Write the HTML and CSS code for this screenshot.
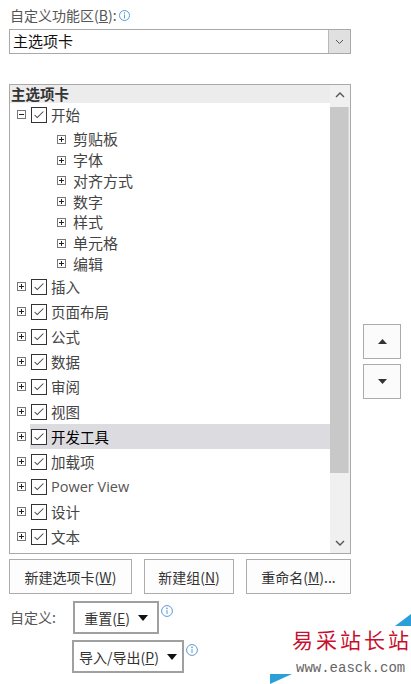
FILE: index.html
```html
<!DOCTYPE html>
<html lang="zh-CN">
<head>
    <meta charset="UTF-8">
    <meta name="viewport" content="width=device-width, initial-scale=1.0">
    <title>自定义功能区</title>
    <link rel="stylesheet" href="styles.css">
</head>
<body>
    <div class="panel">
        <div class="field-label">
            <span>自定义功能区(<u>B</u>):</span>
            <svg class="info info-top" width="11" height="11" viewBox="0 0 11 11"><circle cx="5.5" cy="5.5" r="5" fill="none" stroke="#5b9bd5"/><circle cx="5.5" cy="3" r="0.7" fill="#5b9bd5"/><path d="M5.5 4.6v3.8" stroke="#5b9bd5"/></svg>
        </div>

        <div class="select">
            <span class="select-text">主选项卡</span>
            <span class="select-btn">
                <svg width="9" height="6" viewBox="0 0 9 6"><path d="M1 1l3.5 3.5L8 1" fill="none" stroke="#555"/></svg>
            </span>
        </div>

        <div class="tree-area">
            <div class="tree">
                <div class="tree-body">
                    <div class="tree-head">主选项卡</div>

                    <div class="row top first">
                        <svg class="exp" width="9" height="9" viewBox="0 0 9 9"><rect x="0.5" y="0.5" width="8" height="8" fill="#fff" stroke="#777"/><path d="M2 4.5h5" stroke="#222"/></svg>
                        <span class="item"><span class="check"><svg width="16" height="16" viewBox="0 0 16 16"><path d="M3 8l3 3 7-7" fill="none" stroke="#444" stroke-width="1.2"/></svg></span>开始</span>
                    </div>
                    <div class="subgroup">
                        <div class="row sub"><svg class="exp" width="9" height="9" viewBox="0 0 9 9"><rect x="0.5" y="0.5" width="8" height="8" fill="#fff" stroke="#777"/><path d="M2 4.5h5M4.5 2v5" stroke="#222"/></svg><span class="sub-text">剪贴板</span></div>
                        <div class="row sub"><svg class="exp" width="9" height="9" viewBox="0 0 9 9"><rect x="0.5" y="0.5" width="8" height="8" fill="#fff" stroke="#777"/><path d="M2 4.5h5M4.5 2v5" stroke="#222"/></svg><span class="sub-text">字体</span></div>
                        <div class="row sub"><svg class="exp" width="9" height="9" viewBox="0 0 9 9"><rect x="0.5" y="0.5" width="8" height="8" fill="#fff" stroke="#777"/><path d="M2 4.5h5M4.5 2v5" stroke="#222"/></svg><span class="sub-text">对齐方式</span></div>
                        <div class="row sub"><svg class="exp" width="9" height="9" viewBox="0 0 9 9"><rect x="0.5" y="0.5" width="8" height="8" fill="#fff" stroke="#777"/><path d="M2 4.5h5M4.5 2v5" stroke="#222"/></svg><span class="sub-text">数字</span></div>
                        <div class="row sub"><svg class="exp" width="9" height="9" viewBox="0 0 9 9"><rect x="0.5" y="0.5" width="8" height="8" fill="#fff" stroke="#777"/><path d="M2 4.5h5M4.5 2v5" stroke="#222"/></svg><span class="sub-text">样式</span></div>
                        <div class="row sub"><svg class="exp" width="9" height="9" viewBox="0 0 9 9"><rect x="0.5" y="0.5" width="8" height="8" fill="#fff" stroke="#777"/><path d="M2 4.5h5M4.5 2v5" stroke="#222"/></svg><span class="sub-text">单元格</span></div>
                        <div class="row sub"><svg class="exp" width="9" height="9" viewBox="0 0 9 9"><rect x="0.5" y="0.5" width="8" height="8" fill="#fff" stroke="#777"/><path d="M2 4.5h5M4.5 2v5" stroke="#222"/></svg><span class="sub-text">编辑</span></div>
                    </div>

                    <div class="row top"><svg class="exp" width="9" height="9" viewBox="0 0 9 9"><rect x="0.5" y="0.5" width="8" height="8" fill="#fff" stroke="#777"/><path d="M2 4.5h5M4.5 2v5" stroke="#222"/></svg><span class="item"><span class="check"><svg width="16" height="16" viewBox="0 0 16 16"><path d="M3 8l3 3 7-7" fill="none" stroke="#444" stroke-width="1.2"/></svg></span>插入</span></div>
                    <div class="row top"><svg class="exp" width="9" height="9" viewBox="0 0 9 9"><rect x="0.5" y="0.5" width="8" height="8" fill="#fff" stroke="#777"/><path d="M2 4.5h5M4.5 2v5" stroke="#222"/></svg><span class="item"><span class="check"><svg width="16" height="16" viewBox="0 0 16 16"><path d="M3 8l3 3 7-7" fill="none" stroke="#444" stroke-width="1.2"/></svg></span>页面布局</span></div>
                    <div class="row top"><svg class="exp" width="9" height="9" viewBox="0 0 9 9"><rect x="0.5" y="0.5" width="8" height="8" fill="#fff" stroke="#777"/><path d="M2 4.5h5M4.5 2v5" stroke="#222"/></svg><span class="item"><span class="check"><svg width="16" height="16" viewBox="0 0 16 16"><path d="M3 8l3 3 7-7" fill="none" stroke="#444" stroke-width="1.2"/></svg></span>公式</span></div>
                    <div class="row top"><svg class="exp" width="9" height="9" viewBox="0 0 9 9"><rect x="0.5" y="0.5" width="8" height="8" fill="#fff" stroke="#777"/><path d="M2 4.5h5M4.5 2v5" stroke="#222"/></svg><span class="item"><span class="check"><svg width="16" height="16" viewBox="0 0 16 16"><path d="M3 8l3 3 7-7" fill="none" stroke="#444" stroke-width="1.2"/></svg></span>数据</span></div>
                    <div class="row top"><svg class="exp" width="9" height="9" viewBox="0 0 9 9"><rect x="0.5" y="0.5" width="8" height="8" fill="#fff" stroke="#777"/><path d="M2 4.5h5M4.5 2v5" stroke="#222"/></svg><span class="item"><span class="check"><svg width="16" height="16" viewBox="0 0 16 16"><path d="M3 8l3 3 7-7" fill="none" stroke="#444" stroke-width="1.2"/></svg></span>审阅</span></div>
                    <div class="row top"><svg class="exp" width="9" height="9" viewBox="0 0 9 9"><rect x="0.5" y="0.5" width="8" height="8" fill="#fff" stroke="#777"/><path d="M2 4.5h5M4.5 2v5" stroke="#222"/></svg><span class="item"><span class="check"><svg width="16" height="16" viewBox="0 0 16 16"><path d="M3 8l3 3 7-7" fill="none" stroke="#444" stroke-width="1.2"/></svg></span>视图</span></div>
                    <div class="row top"><svg class="exp" width="9" height="9" viewBox="0 0 9 9"><rect x="0.5" y="0.5" width="8" height="8" fill="#fff" stroke="#777"/><path d="M2 4.5h5M4.5 2v5" stroke="#222"/></svg><span class="item selected"><span class="check"><svg width="16" height="16" viewBox="0 0 16 16"><path d="M3 8l3 3 7-7" fill="none" stroke="#444" stroke-width="1.2"/></svg></span>开发工具</span></div>
                    <div class="row top"><svg class="exp" width="9" height="9" viewBox="0 0 9 9"><rect x="0.5" y="0.5" width="8" height="8" fill="#fff" stroke="#777"/><path d="M2 4.5h5M4.5 2v5" stroke="#222"/></svg><span class="item"><span class="check"><svg width="16" height="16" viewBox="0 0 16 16"><path d="M3 8l3 3 7-7" fill="none" stroke="#444" stroke-width="1.2"/></svg></span>加载项</span></div>
                    <div class="row top"><svg class="exp" width="9" height="9" viewBox="0 0 9 9"><rect x="0.5" y="0.5" width="8" height="8" fill="#fff" stroke="#777"/><path d="M2 4.5h5M4.5 2v5" stroke="#222"/></svg><span class="item"><span class="check"><svg width="16" height="16" viewBox="0 0 16 16"><path d="M3 8l3 3 7-7" fill="none" stroke="#444" stroke-width="1.2"/></svg></span><span class="latin">Power View</span></span></div>
                    <div class="row top"><svg class="exp" width="9" height="9" viewBox="0 0 9 9"><rect x="0.5" y="0.5" width="8" height="8" fill="#fff" stroke="#777"/><path d="M2 4.5h5M4.5 2v5" stroke="#222"/></svg><span class="item"><span class="check"><svg width="16" height="16" viewBox="0 0 16 16"><path d="M3 8l3 3 7-7" fill="none" stroke="#444" stroke-width="1.2"/></svg></span>设计</span></div>
                    <div class="row top"><svg class="exp" width="9" height="9" viewBox="0 0 9 9"><rect x="0.5" y="0.5" width="8" height="8" fill="#fff" stroke="#777"/><path d="M2 4.5h5M4.5 2v5" stroke="#222"/></svg><span class="item"><span class="check"><svg width="16" height="16" viewBox="0 0 16 16"><path d="M3 8l3 3 7-7" fill="none" stroke="#444" stroke-width="1.2"/></svg></span>文本</span></div>
                    <div class="row top"><svg class="exp" width="9" height="9" viewBox="0 0 9 9"><rect x="0.5" y="0.5" width="8" height="8" fill="#fff" stroke="#777"/><path d="M2 4.5h5M4.5 2v5" stroke="#222"/></svg><span class="item"><span class="check"><svg width="16" height="16" viewBox="0 0 16 16"><path d="M3 8l3 3 7-7" fill="none" stroke="#444" stroke-width="1.2"/></svg></span>绘图</span></div>
                </div>
                <div class="scrollbar">
                    <div class="sb-btn">
                        <svg width="10" height="6" viewBox="0 0 10 6"><path d="M1 5l4-4 4 4" fill="none" stroke="#555" stroke-width="1.4"/></svg>
                    </div>
                    <div class="sb-track"><div class="sb-thumb"></div></div>
                    <div class="sb-btn">
                        <svg width="10" height="6" viewBox="0 0 10 6"><path d="M1 1l4 4 4-4" fill="none" stroke="#555" stroke-width="1.4"/></svg>
                    </div>
                </div>
            </div>

            <div class="move-btns">
                <div class="move-btn"><svg width="9" height="5" viewBox="0 0 9 5"><path d="M0 5L4.5 0 9 5z" fill="#333"/></svg></div>
                <div class="move-btn"><svg width="9" height="5" viewBox="0 0 9 5"><path d="M0 0h9L4.5 5z" fill="#333"/></svg></div>
            </div>
        </div>

        <div class="actions">
            <div class="btn btn-wide"><span>新建选项卡(<u>W</u>)</span></div>
            <div class="btn btn-mid"><span>新建组(<u>N</u>)</span></div>
            <div class="btn btn-last"><span>重命名(<u>M</u>)...</span></div>
        </div>

        <div class="custom-row">
            <span class="custom-label">自定义:</span>
            <div class="drop-btn drop-reset"><span>重置(<u>E</u>)</span><svg width="10" height="6" viewBox="0 0 10 6"><path d="M0 0h10L5 6z" fill="#111"/></svg></div>
            <svg class="info" width="12" height="12" viewBox="0 0 12 12"><circle cx="6" cy="6" r="5.4" fill="none" stroke="#5b9bd5"/><circle cx="6" cy="3.4" r="0.8" fill="#5b9bd5"/><path d="M6 5v4" stroke="#5b9bd5"/></svg>
        </div>
        <div class="custom-row second">
            <div class="drop-btn drop-io"><span>导入/导出(<u>P</u>)</span><svg width="10" height="6" viewBox="0 0 10 6"><path d="M0 0h10L5 6z" fill="#111"/></svg></div>
            <svg class="info" width="12" height="12" viewBox="0 0 12 12"><circle cx="6" cy="6" r="5.4" fill="none" stroke="#5b9bd5"/><circle cx="6" cy="3.4" r="0.8" fill="#5b9bd5"/><path d="M6 5v4" stroke="#5b9bd5"/></svg>
        </div>
    </div>

    <div class="watermark">
        <div class="wm-corner wm-tr"></div>
        <div class="wm-name">易采站长站</div>
        <div class="wm-url">www.easck.com</div>
        <div class="wm-corner wm-bl"></div>
    </div>
</body>
</html>
```

FILE: styles.css
```css
body {
    margin: 0;
    padding: 0;
    background: #fff;
    font-family: "Noto Sans CJK SC", "Noto Sans", sans-serif;
    color: #444;
    width: 411px;
    height: 684px;
    overflow: hidden;
    position: relative;
}
.panel {
    padding: 6px 0 0 9px;
    display: flex;
    flex-direction: column;
}
.field-label {
    font-size: 14px;
    line-height: 19px;
    color: #555;
    padding-left: 1px;
    display: flex;
    align-items: flex-start;
}
.info-top {
    margin-left: 1px;
    margin-top: 1px;
}

/* dropdown */
.select {
    margin-top: 4px;
    width: 340px;
    height: 23px;
    border: 1px solid #a9a9a9;
    display: flex;
    align-items: stretch;
}
.select-text {
    flex: 1;
    font-size: 15px;
    line-height: 22px;
    color: #111;
    padding-left: 3px;
}
.select-btn {
    width: 21px;
    background: #e0e0e0;
    border-left: 1px solid #b8b8b8;
    display: flex;
    align-items: center;
    justify-content: center;
}

/* tree */
.tree-area {
    margin-top: 30px;
    display: flex;
    align-items: flex-start;
}
.tree {
    width: 340px;
    height: 468px;
    border: 1px solid #a9a9a9;
    display: flex;
}
.tree-body {
    flex: 1;
    overflow: hidden;
}
.tree-head {
    height: 18px;
    line-height: 17px;
    background: #ececec;
    font-size: 14.5px;
    font-weight: bold;
    color: #333;
    padding-left: 1px;
    overflow: hidden;
}
.row {
    display: flex;
    align-items: center;
    font-size: 14.5px;
    line-height: 18px;
    white-space: nowrap;
}
.row.top {
    height: 25px;
    padding-left: 7px;
}
.row.first {
    height: 23px;
}
.subgroup {
    padding-top: 3px;
}
.row.sub {
    height: 20.75px;
    padding-left: 47px;
    font-size: 15px;
}
.exp {
    flex: none;
}
.sub-text {
    margin-left: 7px;
}
.item {
    margin-left: 4px;
    flex: 1;
    height: 100%;
    display: flex;
    align-items: center;
    padding-left: 1px;
}
.item.selected {
    background: #dcdce0;
    color: #000;
}
.check {
    width: 14px;
    height: 14px;
    border: 1px solid #333;
    background: #fff;
    margin-right: 4px;
    display: flex;
    align-items: center;
    justify-content: center;
}
.check svg {
    width: 14px;
    height: 14px;
}
.latin {
    font-family: "Open Sans", "Noto Sans", sans-serif;
    font-size: 14.5px;
    color: #555;
}

/* scrollbar */
.scrollbar {
    width: 20px;
    background: #f0f0f0;
    display: flex;
    flex-direction: column;
}
.sb-btn {
    height: 20px;
    display: flex;
    align-items: center;
    justify-content: center;
}
.sb-track {
    flex: 1;
    padding-top: 2px;
}
.sb-thumb {
    height: 366px;
    margin: 0 1px 0 0;
    background: #c8c8c8;
    border-right: 1px solid #d6d6d6;
}

/* move up / down */
.move-btns {
    margin-left: 12px;
    margin-top: 240px;
    display: flex;
    flex-direction: column;
    gap: 5px;
}
.move-btn {
    width: 36px;
    height: 33px;
    border: 1px solid #ababab;
    background: #fbfbfb;
    display: flex;
    align-items: center;
    justify-content: center;
}

/* buttons */
.actions {
    margin-top: 5px;
    display: flex;
    gap: 12px;
}
.btn {
    height: 33px;
    border: 1px solid #acacac;
    background: #fdfdfd;
    font-size: 14px;
    color: #333;
    display: flex;
    align-items: center;
    justify-content: center;
    white-space: nowrap;
}
.btn-wide { width: 121px; }
.btn-mid { width: 88px; }
.btn-last { width: 103px; }

.custom-row {
    display: flex;
    align-items: flex-start;
    margin-top: 7px;
}
.custom-row.second {
    margin-top: 6px;
    padding-left: 63px;
}
.custom-label {
    width: 63px;
    font-size: 14px;
    color: #555;
    line-height: 33px;
    padding-left: 1px;
}
.drop-btn {
    height: 29px;
    border: 2px solid #a0a0a0;
    background: #fff;
    font-size: 14px;
    color: #333;
    display: flex;
    align-items: center;
    justify-content: center;
    gap: 8px;
    white-space: nowrap;
}
.drop-reset {
    width: 82px;
}
.drop-io {
    width: 108px;
}
.info {
    margin-left: 2px;
    margin-top: 4px;
}

/* watermark */
.watermark {
    position: absolute;
    left: 262px;
    top: 606px;
    width: 149px;
    height: 78px;
}
.wm-name {
    position: absolute;
    left: 30px;
    top: 20px;
    font-family: "Noto Sans CJK SC", serif;
    font-size: 21px;
    letter-spacing: 3px;
    color: #c8102e;
    line-height: 26px;
    white-space: nowrap;
}
.wm-url {
    position: absolute;
    left: 34px;
    top: 54px;
    font-family: "Liberation Mono", monospace;
    font-size: 14px;
    color: #666;
    line-height: 16px;
    white-space: nowrap;
}
.wm-corner {
    position: absolute;
    width: 0;
    height: 0;
}
.wm-tr {
    right: 0;
    top: 8px;
    border-left: 16px solid transparent;
    border-bottom: 12px solid #2a9fd8;
}
.wm-bl {
    left: 8px;
    bottom: 0;
    border-right: 22px solid transparent;
    border-top: 10px solid #2a9fd8;
}
```
